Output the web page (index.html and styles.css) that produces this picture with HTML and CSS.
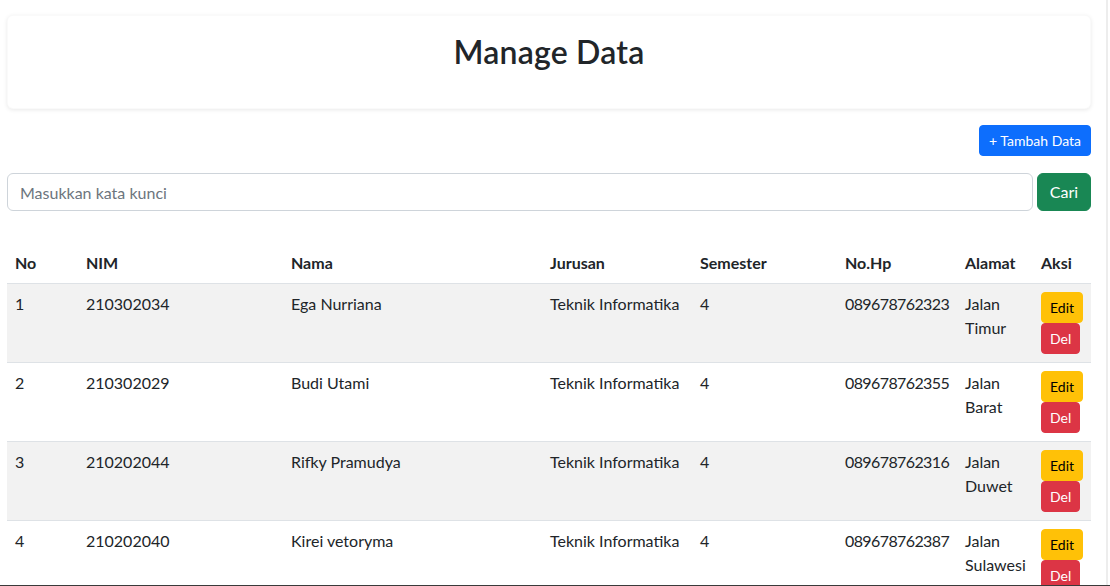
FILE: index.html
```html
<!DOCTYPE html>
<html lang="id">
<head>
<meta charset="utf-8">
<title>Manage Data</title>
<link rel="stylesheet" href="styles.css">
</head>
<body>
<div class="page">
  <div class="card">
    <h2 class="title">Manage Data</h2>
  </div>
  <div class="toolbar">
    <button class="btn btn-sm btn-primary">+ Tambah Data</button>
  </div>
  <form class="search">
    <input class="search-input" type="text" placeholder="Masukkan kata kunci">
    <button class="btn btn-success" type="button">Cari</button>
  </form>
  <table class="data-table">
    <thead>
      <tr>
        <th class="c-no">No</th>
        <th class="c-nim">NIM</th>
        <th class="c-nama">Nama</th>
        <th class="c-jur">Jurusan</th>
        <th class="c-sem">Semester</th>
        <th class="c-hp">No.Hp</th>
        <th class="c-alamat">Alamat</th>
        <th class="c-aksi">Aksi</th>
      </tr>
    </thead>
    <tbody>
      <tr class="striped">
        <td>1</td><td>210302034</td><td>Ega Nurriana</td><td>Teknik Informatika</td><td>4</td><td class="num">089678762323</td><td>Jalan Timur</td>
        <td><div class="actions"><button class="btn btn-sm btn-warning">Edit</button><button class="btn btn-sm btn-danger">Del</button></div></td>
      </tr>
      <tr>
        <td>2</td><td>210302029</td><td>Budi Utami</td><td>Teknik Informatika</td><td>4</td><td class="num">089678762355</td><td>Jalan Barat</td>
        <td><div class="actions"><button class="btn btn-sm btn-warning">Edit</button><button class="btn btn-sm btn-danger">Del</button></div></td>
      </tr>
      <tr class="striped">
        <td>3</td><td>210202044</td><td>Rifky Pramudya</td><td>Teknik Informatika</td><td>4</td><td class="num">089678762316</td><td>Jalan Duwet</td>
        <td><div class="actions"><button class="btn btn-sm btn-warning">Edit</button><button class="btn btn-sm btn-danger">Del</button></div></td>
      </tr>
      <tr>
        <td>4</td><td>210202040</td><td>Kirei vetoryma</td><td>Teknik Informatika</td><td>4</td><td class="num">089678762387</td><td>Jalan Sulawesi</td>
        <td><div class="actions"><button class="btn btn-sm btn-warning">Edit</button><button class="btn btn-sm btn-danger">Del</button></div></td>
      </tr>
    </tbody>
  </table>
</div>
<div class="edge-right"></div>
<div class="edge-bottom"></div>
</body>
</html>
```

FILE: styles.css
```css
* { box-sizing: border-box; }
html, body { margin: 0; padding: 0; background: #fff; }
body {
  font-family: "Lato", "Liberation Sans", sans-serif;
  font-size: 16px;
  line-height: 24px;
  color: #212529;
  overflow: hidden;
}
.page {
  width: 1084px;
  margin-left: 7px;
  padding-top: 15px;
}
.card {
  background: #fff;
  border-radius: 6px;
  box-shadow: 0 1px 4px rgba(0, 0, 0, 0.09);
  border: 1px solid rgba(0, 0, 0, 0.02);
  padding: 17px 16px 37px;
}
.title {
  margin: 0;
  text-align: center;
  font-size: 32px;
  font-weight: 600;
  line-height: 38px;
  letter-spacing: 0.2px;
}
.toolbar {
  display: flex;
  justify-content: flex-end;
  margin-top: 16px;
}
.btn {
  font-family: inherit;
  border: 1px solid transparent;
  border-radius: 6px;
  font-size: 16px;
  line-height: 24px;
  padding: 6px 12px;
  color: #fff;
  cursor: pointer;
}
.btn-sm {
  font-size: 14px;
  line-height: 21px;
  padding: 4px 8px;
  border-radius: 4px;
}
.toolbar .btn { padding: 4px 9px; }
.btn-primary { background: #0d6efd; border-color: #0d6efd; }
.btn-success { background: #198754; border-color: #198754; }
.btn-warning { background: #ffc107; border-color: #ffc107; color: #000; }
.btn-danger { background: #dc3545; border-color: #dc3545; }
.search {
  display: flex;
  gap: 4px;
  margin: 17px 0 0;
}
.search-input {
  flex: 1;
  height: 38px;
  border: 1px solid #ced4da;
  border-radius: 6px;
  padding: 6px 12px;
  font-family: inherit;
  font-size: 16px;
  color: #212529;
}
.search-input::placeholder { color: #6c757d; }
.search .btn { width: 54px; padding: 6px 0; }
.data-table {
  margin-top: 32px;
  width: 1084px;
  border-collapse: collapse;
  table-layout: fixed;
}
.data-table th, .data-table td {
  text-align: left;
  vertical-align: top;
  padding: 8px;
  border-bottom: 1px solid #dee2e6;
}
.data-table th { font-weight: 700; }
.data-table tr.striped td { background: #f2f2f2; }
.data-table td.num { letter-spacing: -0.6px; }
.c-no { width: 71px; }
.c-nim { width: 205px; }
.c-nama { width: 259px; }
.c-jur { width: 150px; }
.c-sem { width: 145px; }
.c-hp { width: 120px; }
.c-alamat { width: 76px; }
.c-aksi { width: 58px; }
.actions {
  display: flex;
  flex-direction: column;
  align-items: flex-start;
}
.actions .btn { height: 31px; }
.edge-right {
  position: fixed;
  top: 0;
  bottom: 0;
  left: 1106px;
  width: 2px;
  background: #ededed;
}
.edge-bottom {
  position: fixed;
  left: 0;
  right: 0;
  bottom: 0;
  height: 1px;
  background: #3a3a3a;
}
```
